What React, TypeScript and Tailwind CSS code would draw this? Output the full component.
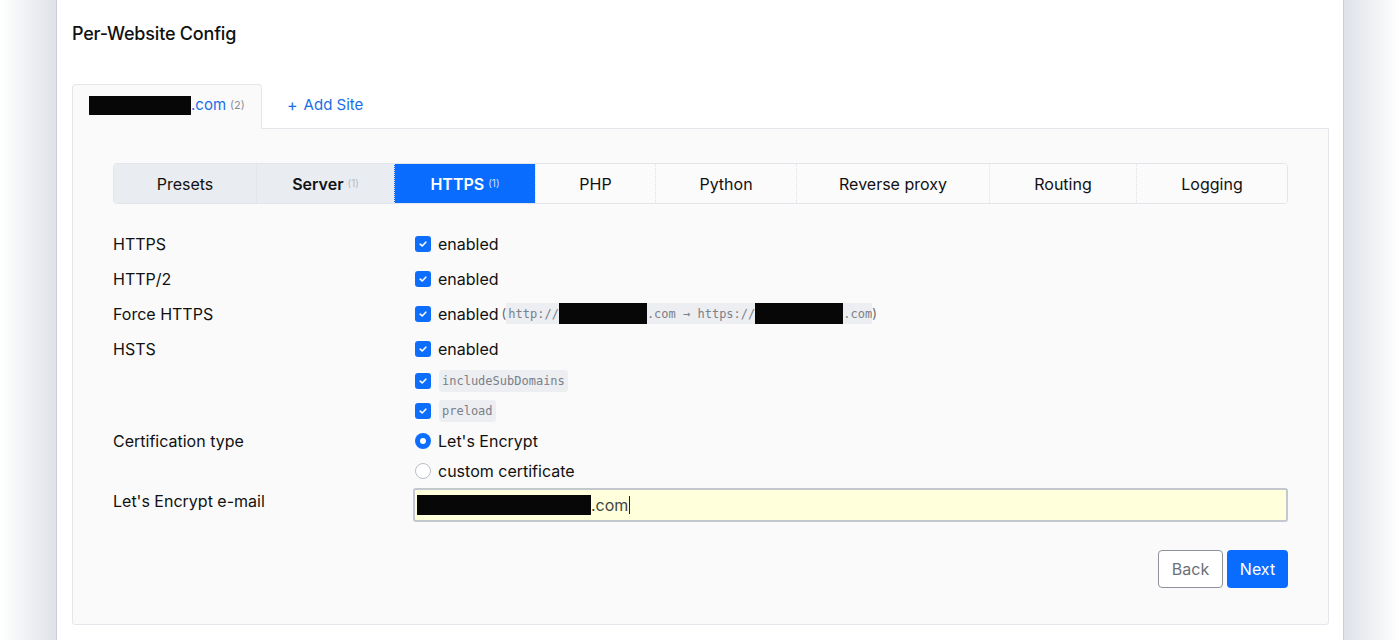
import React from "react";

const Check = () => (
  <span className="flex h-4 w-4 items-center justify-center rounded-[3px] bg-[#0d6efd]">
    <svg width="10" height="10" viewBox="0 0 10 10" fill="none">
      <path d="M2.2 5.2 L4.2 7 L7.8 3.2" stroke="white" strokeWidth="1.6" strokeLinecap="round" strokeLinejoin="round" />
    </svg>
  </span>
);

const Radio = ({ on }: { on: boolean }) =>
  on ? (
    <span className="flex h-4 w-4 items-center justify-center rounded-full bg-[#0d6efd]">
      <span className="h-[6px] w-[6px] rounded-full bg-white" />
    </span>
  ) : (
    <span className="h-4 w-4 rounded-full border border-[#b9bec7] bg-white" />
  );

const Code = ({ children }: { children: React.ReactNode }) => (
  <span className="rounded-[3px] bg-[#eceef1] px-[3px] py-[2px] text-[12px] text-[#7a7f88]" style={{ fontFamily: '"DejaVu Sans Mono", "Liberation Mono", monospace' }}>
    {children}
  </span>
);

const Redact = ({ w, h = 21 }: { w: number; h?: number }) => (
  <span className="inline-block bg-[#070707] align-middle" style={{ width: w, height: h }} />
);

const tabs: { label: string; w: string; cls: string; badge?: string; bold?: boolean }[] = [
  { label: "Presets", w: "w-[142px]", cls: "bg-[#e9ecf0] text-[#111]" },
  { label: "Server", w: "w-[138px]", cls: "bg-[#e9ecf0] text-[#111]", badge: "(1)", bold: true },
  { label: "HTTPS", w: "w-[141px]", cls: "bg-[#0a6cff] text-white", badge: "(1)", bold: true },
  { label: "PHP", w: "w-[120px]", cls: "bg-[#fbfbfc] text-[#111]" },
  { label: "Python", w: "w-[141px]", cls: "bg-[#fbfbfc] text-[#111]" },
  { label: "Reverse proxy", w: "w-[193px]", cls: "bg-[#fbfbfc] text-[#111]" },
  { label: "Routing", w: "w-[147px]", cls: "bg-[#fbfbfc] text-[#111]" },
  { label: "Logging", w: "flex-1", cls: "bg-[#fbfbfc] text-[#111]" },
];

export default function App() {
  return (
    <div className="h-[640px] w-[1400px] overflow-hidden bg-white text-[#111]" style={{ fontFamily: 'Inter, "Noto Sans", sans-serif' }}>
      <div className="flex h-full">
        <div className="w-[56px] bg-gradient-to-r from-white to-[#dfe2e8]" />
        <div className="h-full w-[1288px] border-x border-[#c9cdd5] bg-white px-[15px] pt-[22px]">
          <h2 className="text-[18px] font-medium leading-[24px] tracking-[-0.2px] text-[#111]">Per-Website Config</h2>

          <div className="mt-[38px] flex items-end">
            <div className="relative z-10 -mb-px flex h-[45px] w-[190px] items-center rounded-t-[4px] border border-b-0 border-[#e3e6eb] bg-[#fafafa] pb-[3px] pl-[16px]">
              <Redact w={102} h={19} />
              <span className="text-[15px] text-[#1a6ee6]">.com</span>
              <span className="ml-[4px] text-[11px] text-[#8a8f98]">(2)</span>
            </div>
            <div className="flex h-[44px] items-center pb-[2px] pl-[25px] text-[15px] text-[#1a6ee6]">
              <span className="mr-[6px] text-[16px]">+</span>Add Site
            </div>
          </div>

          <div className="h-[497px] w-[1257px] rounded-b-[3px] border border-[#e3e6eb] bg-[#fafafa] px-[40px] pt-[34px]">
            <div className="flex h-[41px] overflow-hidden rounded-[4px] border border-[#e2e5ea]">
              {tabs.map((t, i) => (
                <div
                  key={t.label}
                  className={`flex items-center justify-center text-[16px] ${t.w} ${t.cls} ${i > 0 ? "border-l border-dotted border-[#dde0e5]" : ""} ${t.bold ? "font-semibold" : ""}`}
                >
                  {t.label}
                  {t.badge && <span className={`ml-[4px] text-[10px] font-normal ${t.label === "HTTPS" ? "text-[#cfe0ff]" : "text-[#b5b9c0]"}`}>{t.badge}</span>}
                </div>
              ))}
            </div>

            <div className="mt-[22px] text-[16px]">
              {["HTTPS", "HTTP/2"].map((l) => (
                <div key={l} className="flex h-[35px] items-center">
                  <div className="w-[300px]">{l}</div>
                  <div className="flex items-center gap-[7px] pl-[2px]">
                    <Check />
                    <span>enabled</span>
                  </div>
                </div>
              ))}
              <div className="flex h-[35px] items-center">
                <div className="w-[300px]">Force HTTPS</div>
                <div className="flex items-center pl-[2px]">
                  <Check />
                  <span className="ml-[7px]">enabled</span>
                  <span className="ml-[3px] text-[13px] text-[#666]">(</span>
                  <span className="flex items-center bg-[#eceef1] pl-[2px] text-[12px] text-[#7a7f88]" style={{ fontFamily: '"DejaVu Sans Mono", "Liberation Mono", monospace' }}>
                    http://
                    <Redact w={88} />
                    .com → https://
                    <Redact w={88} />
                    .com
                  </span>
                  <span className="text-[13px] text-[#666]">)</span>
                </div>
              </div>
              <div className="flex h-[35px] items-center">
                <div className="w-[300px]">HSTS</div>
                <div className="flex items-center gap-[7px] pl-[2px]">
                  <Check />
                  <span>enabled</span>
                </div>
              </div>
              <div className="flex h-[30px] items-center">
                <div className="w-[300px]" />
                <div className="flex items-center gap-[8px] pl-[2px]">
                  <Check />
                  <Code>includeSubDomains</Code>
                </div>
              </div>
              <div className="flex h-[30px] items-center">
                <div className="w-[300px]" />
                <div className="flex items-center gap-[8px] pl-[2px]">
                  <Check />
                  <Code>preload</Code>
                </div>
              </div>
              <div className="flex">
                <div className="flex h-[30px] w-[300px] items-center">Certification type</div>
                <div className="pl-[2px]">
                  <div className="flex h-[30px] items-center gap-[7px]">
                    <Radio on />
                    <span>Let's Encrypt</span>
                  </div>
                  <div className="flex h-[30px] items-center gap-[7px]">
                    <Radio on={false} />
                    <span>custom certificate</span>
                  </div>
                </div>
              </div>
              <div className="mt-[2px] flex">
                <div className="flex h-[26px] w-[300px] items-center">Let's Encrypt e-mail</div>
                <div className="flex h-[34px] flex-1 items-center rounded-[3px] border-2 border-[#c3c7ce] bg-[#ffffdc] pl-[2px]">
                  <Redact w={174} h={20} />
                  <span className="text-[16px] text-[#444]">.com</span>
                  <span className="ml-[1px] h-[18px] w-px bg-[#222]" />
                </div>
              </div>
            </div>

            <div className="mt-[28px] flex justify-end gap-[4px]">
              <button className="h-[38px] w-[65px] rounded-[4px] border border-[#8d929b] bg-white text-[16px] text-[#6b6f76]">Back</button>
              <button className="h-[38px] w-[61px] rounded-[4px] bg-[#0a6cff] text-[16px] text-white">Next</button>
            </div>
          </div>
        </div>
        <div className="w-[56px] bg-gradient-to-r from-[#dfe2e8] to-white" />
      </div>
    </div>
  );
}
